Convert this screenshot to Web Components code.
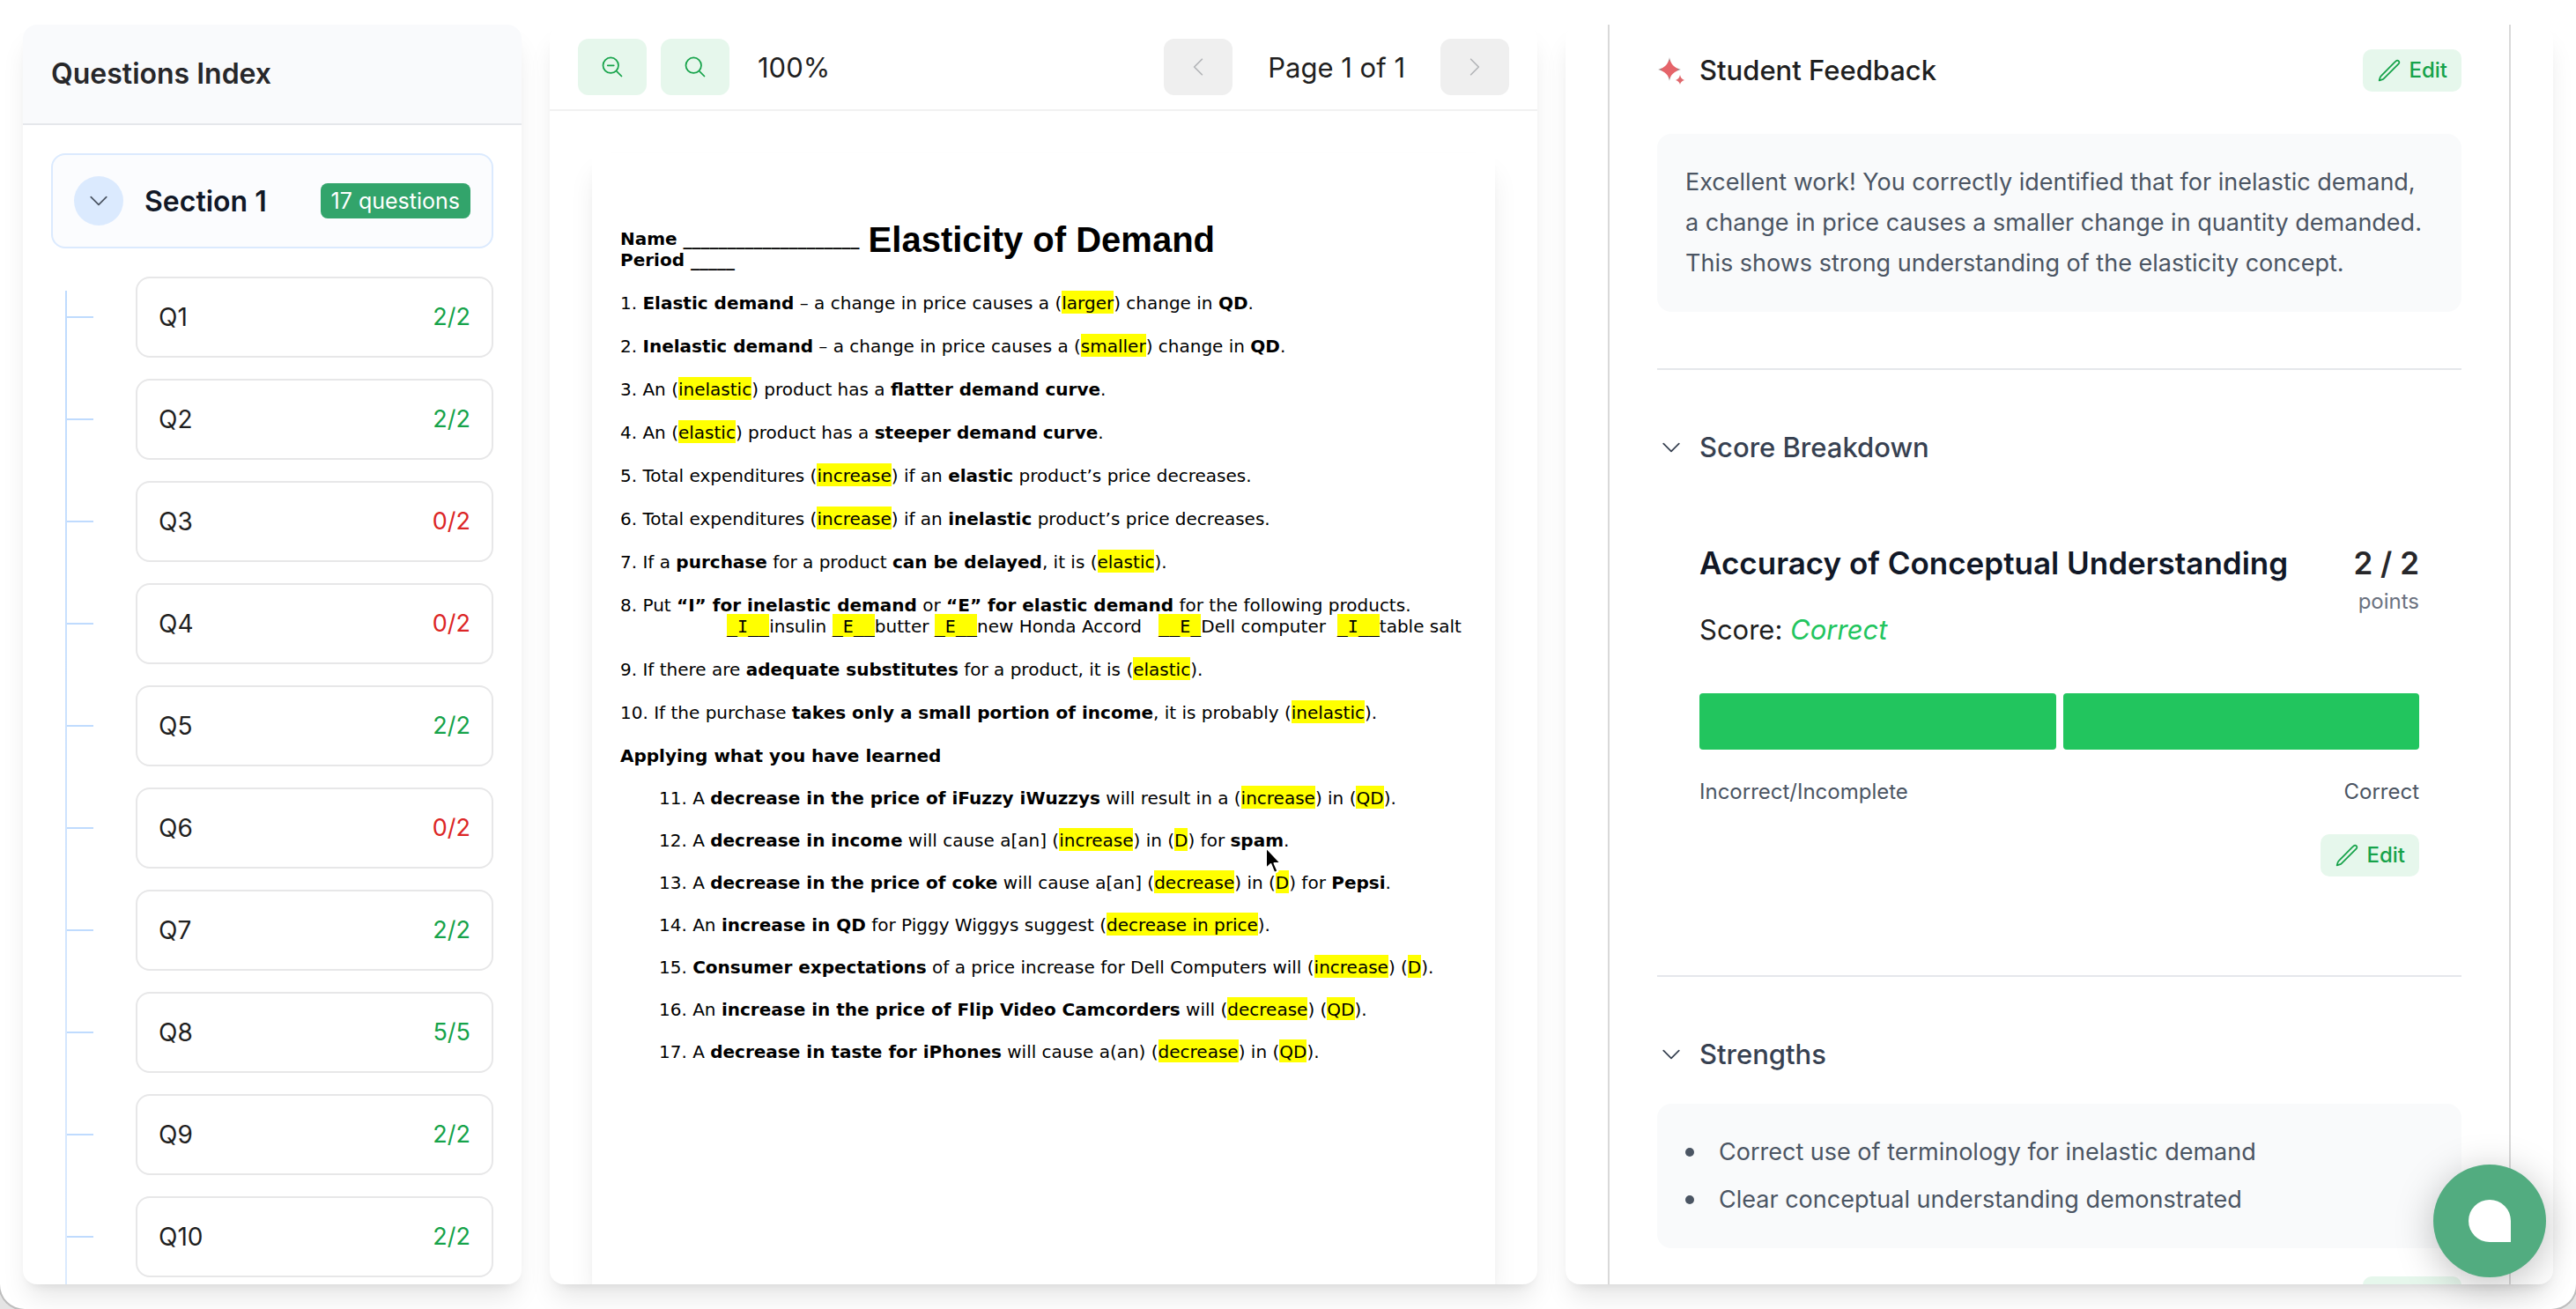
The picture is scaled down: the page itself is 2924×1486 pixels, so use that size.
<!DOCTYPE html>
<html lang="en">
<head>
<meta charset="utf-8">
<title>Grading</title>
<style>
  html {
    background: #e4e4e4;
  }

  body {
    margin: 0;
    font-family: Inter, "Liberation Sans", sans-serif;
    font-size: 28px;
    color: #1f1f1f;
  }
</style>
</head>
<body>
<grading-app>
  <questions-index slot="index" heading="Questions Index">
    <section-toggle slot="section" label="Section 1" count="17 questions"></section-toggle>
    <question-item label="Q1" score="2/2"></question-item>
    <question-item label="Q2" score="2/2"></question-item>
    <question-item label="Q3" score="0/2" wrong></question-item>
    <question-item label="Q4" score="0/2" wrong></question-item>
    <question-item label="Q5" score="2/2"></question-item>
    <question-item label="Q6" score="0/2" wrong></question-item>
    <question-item label="Q7" score="2/2"></question-item>
    <question-item label="Q8" score="5/5"></question-item>
    <question-item label="Q9" score="2/2"></question-item>
    <question-item label="Q10" score="2/2"></question-item>
  </questions-index>

  <document-viewer slot="document">
    <work-sheet></work-sheet>
  </document-viewer>

  <feedback-panel slot="feedback">
    <feedback-section heading="Student Feedback" icon="sparkle" editable>
      <note-box>Excellent work! You correctly identified that for inelastic demand, a change in price causes a smaller change in quantity demanded. This shows strong understanding of the elasticity concept.</note-box>
    </feedback-section>
    <feedback-section heading="Score Breakdown" icon="chevronDown" collapsible>
      <score-rubric heading="Accuracy of Conceptual Understanding" verdict="Correct" points="2 / 2" low="Incorrect/Incomplete" high="Correct" steps="2"></score-rubric>
    </feedback-section>
    <feedback-section heading="Strengths" icon="chevronDown" collapsible>
      <note-box>
        <note-point>Correct use of terminology for inelastic demand</note-point>
        <note-point>Clear conceptual understanding demonstrated</note-point>
      </note-box>
      <edit-button slot="footer"></edit-button>
    </feedback-section>
  </feedback-panel>

  <chat-launcher slot="chat"></chat-launcher>
</grading-app>

<script>
const icons = {
  chevronDown: 'm19.5 8.25-7.5 7.5-7.5-7.5',
  chevronLeft: 'M15.75 19.5 8.25 12l7.5-7.5',
  chevronRight: 'm8.25 4.5 7.5 7.5-7.5 7.5',
  search: 'm21 21-5.197-5.197m0 0A7.5 7.5 0 1 0 5.196 5.196a7.5 7.5 0 0 0 10.607 10.607Z',
  zoomOut: 'm21 21-5.197-5.197m0 0A7.5 7.5 0 1 0 5.196 5.196a7.5 7.5 0 0 0 10.607 10.607ZM13.5 10.5h-6',
  pencil: 'm16.862 4.487 1.687-1.688a1.875 1.875 0 1 1 2.652 2.652L6.832 19.82a4.5 4.5 0 0 1-1.897 1.13l-2.685.8.8-2.685a4.5 4.5 0 0 1 1.13-1.897L16.863 4.487Z'
}

const sparkle = `
<svg width="32" height="32" viewBox="0 0 32 32" aria-hidden="true">
  <defs>
    <radialGradient id="glow">
      <stop offset="0.6" stop-color="#e5646a"/>
      <stop offset="0.8" stop-color="#a07c7e"/>
      <stop offset="1" stop-color="#b9b9b9"/>
    </radialGradient>
  </defs>
  <path fill="url(#glow)" d="M14 1C15 8 19 13 27 15C19 17 15 21 14 28C13 21 9 17 1 15C9 13 13 8 14 1Z"/>
  <path fill="#e0696e" d="M26 21C26.600 24 28 26 31 27C28 28 26.600 29.500 26 32C25.400 29.500 24 28 21 27C24 26 25.400 24 26 21Z"/>
</svg>
`

function icon(name) {
  if (name === 'sparkle') return sparkle

  return `
    <svg width="28" height="28" viewBox="0 0 24 24" fill="none" stroke="currentColor"
      stroke-width="1.5" stroke-linecap="round" stroke-linejoin="round" aria-hidden="true">
      <path d="${icons[name]}"/>
    </svg>
  `
}

const base = `
  * { box-sizing: border-box; }
  h1, h2, h3, p { margin: 0; }
  svg { display: block; flex: none; }
  button { font: inherit; color: inherit; border: 0; background: none; padding: 0; margin: 0; cursor: pointer; }
`

class BaseElement extends HTMLElement {
  constructor() {
    super()
    this.attachShadow({mode: 'open'})
  }

  connectedCallback() {
    this.shadowRoot.innerHTML = `<style>${base}${this.styles()}</style>${this.markup()}`
  }

  attr(name) {
    return this.getAttribute(name) || ''
  }

  styles() { return '' }
  markup() { return '<slot></slot>' }
}

class GradingApp extends BaseElement {
  styles() {
    return `
      :host {
        --card-shadow: 0 20px 30px -6px rgba(0, 0, 0, .1), 0 8px 12px -8px rgba(0, 0, 0, .1);
        display: grid;
        grid-template-columns: 566px minmax(0, 1fr) minmax(0, 1fr);
        grid-template-rows: minmax(0, 1fr);
        gap: 32px;
        height: 100vh;
        box-sizing: border-box;
        padding: 28px 26px;
        overflow: hidden;
        background: #fff;
        border-radius: 0 0 28px 28px;
        box-shadow: 0 0 0 2px #bdbdbd;
      }
    `
  }

  markup() {
    return `
      <slot name="index"></slot>
      <slot name="document"></slot>
      <slot name="feedback"></slot>
      <slot name="chat"></slot>
    `
  }
}

const panel = `
  :host {
    display: flex;
    flex-direction: column;
    min-width: 0;
    overflow: hidden;
    background: #fff;
    border-radius: 16px;
    box-shadow: var(--card-shadow);
  }
`

class QuestionsIndex extends BaseElement {
  styles() {
    return `
      ${panel}
      header {
        padding: 32px;
        background: #f9fafc;
        border-bottom: 2px solid #e5e7eb;
      }
      h2 {
        font-size: 32px;
        line-height: 48px;
        font-weight: 600;
        color: #27272a;
      }
      .body {
        flex: 1;
        display: flex;
        flex-direction: column;
        gap: 32px;
        padding: 32px 32px 0;
      }
      nav {
        flex: 1;
        position: relative;
        display: flex;
        flex-direction: column;
        gap: 24px;
      }
      /* trunk of the tree that the ticks hang on */
      nav::before {
        content: "";
        position: absolute;
        left: 16px;
        top: 16px;
        bottom: 0;
        width: 2px;
        background: linear-gradient(#bfdbfe, #dbeafe);
      }
    `
  }

  markup() {
    return `
      <header><h2>${this.attr('heading')}</h2></header>
      <div class="body">
        <slot name="section"></slot>
        <nav><slot></slot></nav>
      </div>
    `
  }
}

class SectionToggle extends BaseElement {
  styles() {
    return `
      :host { display: block; }
      button {
        display: flex;
        align-items: center;
        gap: 24px;
        width: 100%;
        padding: 24px;
        border: 2px solid #dbeafe;
        border-radius: 16px;
        background: #fbfcfe;
      }
      .chevron {
        display: grid;
        place-items: center;
        width: 56px;
        height: 56px;
        border-radius: 50%;
        background: #dbeafe;
        color: #4b5563;
      }
      .label {
        flex: 1;
        text-align: left;
        font-size: 32px;
        font-weight: 600;
        color: #111827;
      }
      .count {
        padding: 0 12px;
        border-radius: 8px;
        background: #32a46b;
        color: #fff;
        font-size: 25px;
        line-height: 40px;
      }
    `
  }

  markup() {
    return `
      <button type="button" aria-expanded="true">
        <span class="chevron">${icon('chevronDown')}</span>
        <span class="label">${this.attr('label')}</span>
        <span class="count">${this.attr('count')}</span>
      </button>
    `
  }
}

class QuestionItem extends BaseElement {
  styles() {
    return `
      :host {
        --score-color: #16a34a;
        display: flex;
        align-items: center;
      }
      :host([wrong]) { --score-color: #dc2626; }
      .tick {
        width: 32px;
        height: 2px;
        margin: 0 48px 0 16px;
        background: #bfdbfe;
      }
      button {
        flex: 1;
        display: flex;
        justify-content: space-between;
        padding: 24px;
        border: 2px solid #e7e7e8;
        border-radius: 16px;
        background: #fff;
        font-size: 28px;
        line-height: 40px;
      }
      .score {
        font-size: 27px;
        color: var(--score-color);
      }
    `
  }

  markup() {
    return `
      <span class="tick"></span>
      <button type="button">
        <span>${this.attr('label')}</span>
        <span class="score">${this.attr('score')}</span>
      </button>
    `
  }
}

class IconButton extends BaseElement {
  styles() {
    return `
      :host { display: block; }
      button {
        display: grid;
        place-items: center;
        width: 78px;
        height: 64px;
        border-radius: 12px;
        background: #e6f7ec;
        color: #16a34a;
      }
      button:disabled {
        background: #efefef;
        color: #b4b6b9;
        cursor: default;
      }
    `
  }

  markup() {
    const disabled = this.hasAttribute('disabled') ? 'disabled' : ''

    return `<button type="button" aria-label="${this.attr('label')}" ${disabled}>${icon(this.attr('icon'))}</button>`
  }
}

class DocumentViewer extends BaseElement {
  styles() {
    return `
      ${panel}
      header, .zoom, .pager {
        display: flex;
        align-items: center;
      }
      header {
        justify-content: space-between;
        padding: 16px 32px;
        border-bottom: 2px solid #f1f1f1;
        font-size: 31px;
      }
      .zoom { gap: 16px; }
      .zoom output { margin-left: 16px; }
      .pager { gap: 40px; }
      .body {
        flex: 1;
        display: flex;
        padding: 48px 48px 0;
      }
    `
  }

  markup() {
    return `
      <header>
        <div class="zoom">
          <icon-button icon="zoomOut" label="Zoom out"></icon-button>
          <icon-button icon="search" label="Zoom in"></icon-button>
          <output>100%</output>
        </div>
        <div class="pager">
          <icon-button icon="chevronLeft" label="Previous page" disabled></icon-button>
          <span>Page 1 of 1</span>
          <icon-button icon="chevronRight" label="Next page" disabled></icon-button>
        </div>
      </header>
      <div class="body"><slot></slot></div>
    `
  }
}

class WorkSheet extends BaseElement {
  styles() {
    return `
      :host {
        flex: 1;
        position: relative;
        box-sizing: border-box;
        padding: 63px 32px 0;
        background: #fff;
        box-shadow: var(--card-shadow);
        color: #000;
        font-family: "DejaVu Sans", sans-serif;
        font-size: 20px;
        line-height: 24px;
        white-space: nowrap;
      }
      header {
        display: flex;
        align-items: flex-end;
        gap: 10px;
        margin-bottom: 25px;
        font-weight: 700;
      }
      h1 {
        font-family: "Liberation Sans", sans-serif;
        font-size: 40px;
        line-height: 70px;
      }
      .main, .applied {
        display: grid;
        gap: 25px;
      }
      .applied {
        gap: 24px;
        padding: 24px 0 0 44px;
      }
      .products {
        display: block;
        padding-left: 121px;
      }
      mark {
        padding-top: 2px;
        background: #ff0;
        color: inherit;
      }
      .blank { font-family: "DejaVu Sans Mono", monospace; }
      .cursor {
        position: absolute;
        left: 763px;
        top: 786px;
      }
    `
  }

  markup() {
    return `
      <header>
        <div>
          <p>Name ____________________</p>
          <p>Period _____</p>
        </div>
        <h1>Elasticity of Demand</h1>
      </header>
      <div class="main">
        <p>1. <b>Elastic demand</b> – a change in price causes a (<mark>larger</mark>) change in <b>QD</b>.</p>
        <p>2. <b>Inelastic demand</b> – a change in price causes a (<mark>smaller</mark>) change in <b>QD</b>.</p>
        <p>3. An (<mark>inelastic</mark>) product has a <b>flatter demand curve</b>.</p>
        <p>4. An (<mark>elastic</mark>) product has a <b>steeper demand curve</b>.</p>
        <p>5. Total expenditures (<mark>increase</mark>) if an <b>elastic</b> product’s price decreases.</p>
        <p>6. Total expenditures (<mark>increase</mark>) if an <b>inelastic</b> product’s price decreases.</p>
        <p>7. If a <b>purchase</b> for a product <b>can be delayed</b>, it is (<mark>elastic</mark>).</p>
        <p>8. Put <b>“I” for inelastic demand</b> or <b>“E” for elastic demand</b> for the following products.
          <span class="products"><mark class="blank">_I__</mark>insulin <mark class="blank">_E__</mark>butter <mark class="blank">_E__</mark>new Honda Accord &nbsp;&nbsp;<mark class="blank">__E_</mark>Dell computer &nbsp;<mark class="blank">_I__</mark>table salt</span></p>
        <p>9. If there are <b>adequate substitutes</b> for a product, it is (<mark>elastic</mark>).</p>
        <p>10. If the purchase <b>takes only a small portion of income</b>, it is probably (<mark>inelastic</mark>).</p>
        <p><b>Applying what you have learned</b></p>
      </div>
      <div class="applied">
        <p>11. A <b>decrease in the price of iFuzzy iWuzzys</b> will result in a (<mark>increase</mark>) in (<mark>QD</mark>).</p>
        <p>12. A <b>decrease in income</b> will cause a[an] (<mark>increase</mark>) in (<mark>D</mark>) for <b>spam</b>.</p>
        <p>13. A <b>decrease in the price of coke</b> will cause a[an] (<mark>decrease</mark>) in (<mark>D</mark>) for <b>Pepsi</b>.</p>
        <p>14. An <b>increase in QD</b> for Piggy Wiggys suggest (<mark>decrease in price</mark>).</p>
        <p>15. <b>Consumer expectations</b> of a price increase for Dell Computers will (<mark>increase</mark>) (<mark>D</mark>).</p>
        <p>16. An <b>increase in the price of Flip Video Camcorders</b> will (<mark>decrease</mark>) (<mark>QD</mark>).</p>
        <p>17. A <b>decrease in taste for iPhones</b> will cause a(an) (<mark>decrease</mark>) in (<mark>QD</mark>).</p>
      </div>
      <svg class="cursor" width="22" height="34" viewBox="0 0 22 34" aria-hidden="true">
        <path fill="#000" stroke="#fff" stroke-width="2" stroke-linejoin="round"
          d="M2 2V26L7.500 21L11.500 31L15.500 29L11.500 20H19Z"/>
      </svg>
    `
  }
}

class FeedbackPanel extends BaseElement {
  styles() {
    return `
      ${panel}
      .card {
        flex: 1 0 auto;
        margin: 0 48px;
        padding: 28px 54px;
        border: solid #d9d9d9;
        border-width: 0 2px;
      }
    `
  }

  markup() {
    return '<div class="card"><slot></slot></div>'
  }
}

class FeedbackSection extends BaseElement {
  styles() {
    return `
      :host {
        display: block;
        padding-bottom: 64px;
      }
      :host(:not(:first-child)) {
        border-top: 2px solid #e5e7eb;
        padding-top: 64px;
      }
      header {
        display: flex;
        align-items: center;
        justify-content: space-between;
        margin-bottom: 32px;
      }
      :host([editable]) header { margin-bottom: 48px; }
      h3, button {
        display: flex;
        align-items: center;
        gap: 16px;
        font-size: 31px;
        line-height: 48px;
        font-weight: 500;
      }
      :host([collapsible]) h3 { color: #374151; }
      .icon {
        display: grid;
        place-items: center;
        width: 32px;
      }
      ::slotted([slot="footer"]) {
        margin: 32px 0 0 auto;
      }
    `
  }

  markup() {
    const label = `<span class="icon">${icon(this.attr('icon'))}</span>${this.attr('heading')}`
    const title = this.hasAttribute('collapsible')
      ? `<button type="button" aria-expanded="true">${label}</button>`
      : label

    return `
      <header>
        <h3>${title}</h3>
        ${this.hasAttribute('editable') ? '<edit-button></edit-button>' : ''}
      </header>
      <slot></slot>
      <slot name="footer"></slot>
    `
  }
}

class NoteBox extends BaseElement {
  styles() {
    return `
      :host {
        display: flex;
        flex-direction: column;
        gap: 8px;
        padding: 32px;
        border-radius: 16px;
        background: #f9fafb;
        color: #4b5563;
        font-size: 27px;
        line-height: 46px;
      }
    `
  }
}

class NotePoint extends BaseElement {
  styles() {
    return `
      :host {
        display: flex;
        align-items: center;
        gap: 28px;
      }
      .dot {
        width: 10px;
        height: 10px;
        border-radius: 50%;
        background: currentColor;
      }
    `
  }

  markup() {
    return '<span class="dot"></span><span><slot></slot></span>'
  }
}

class EditButton extends BaseElement {
  styles() {
    return `
      :host {
        display: block;
        width: fit-content;
      }
      button {
        display: flex;
        align-items: center;
        gap: 8px;
        height: 48px;
        padding: 0 16px;
        border-radius: 10px;
        background: #e6f7ec;
        color: #16a34a;
        font-size: 24px;
        line-height: 32px;
        font-weight: 500;
      }
    `
  }

  markup() {
    return `<button type="button">${icon('pencil')}Edit</button>`
  }
}

class ScoreRubric extends BaseElement {
  styles() {
    return `
      :host {
        display: block;
        padding: 47px 48px 48px;
      }
      .top, .scale, .ends {
        display: flex;
        justify-content: space-between;
      }
      .title {
        display: grid;
        gap: 24px;
      }
      .heading, .points {
        font-size: 35px;
        line-height: 56px;
        font-weight: 600;
      }
      .heading { color: #111827; }
      .points { color: #27272a; }
      .verdict {
        font-size: 31px;
        line-height: 48px;
      }
      em { color: #22c55e; }
      .total {
        text-align: right;
        font-size: 24px;
        line-height: 32px;
        color: #6b7280;
      }
      .scale {
        gap: 8px;
        margin: 48px 0 32px;
      }
      .scale span {
        flex: 1;
        height: 64px;
        border-radius: 4px;
        background: #22c55e;
      }
      .ends {
        font-size: 24px;
        line-height: 32px;
        color: #4b5563;
      }
      edit-button { margin: 32px 0 0 auto; }
    `
  }

  markup() {
    return `
      <div class="top">
        <div class="title">
          <div class="heading">${this.attr('heading')}</div>
          <div class="verdict">Score: <em>${this.attr('verdict')}</em></div>
        </div>
        <div class="total">
          <div class="points">${this.attr('points')}</div>
          points
        </div>
      </div>
      <div class="scale">${'<span></span>'.repeat(Number(this.attr('steps')))}</div>
      <div class="ends"><span>${this.attr('low')}</span><span>${this.attr('high')}</span></div>
      <edit-button></edit-button>
    `
  }
}

class ChatLauncher extends BaseElement {
  styles() {
    return `
      :host {
        position: fixed;
        right: 34px;
        bottom: 36px;
      }
      button {
        display: grid;
        place-items: center;
        width: 128px;
        height: 128px;
        border-radius: 50%;
        background: #52ac80;
        box-shadow: 0 8px 44px rgba(0, 0, 0, .25);
      }
      .bubble {
        width: 48px;
        height: 48px;
        border-radius: 50% 50% 0 50%;
        background: #fff;
      }
    `
  }

  markup() {
    return '<button type="button" aria-label="Open chat"><span class="bubble"></span></button>'
  }
}

customElements.define('grading-app', GradingApp)
customElements.define('questions-index', QuestionsIndex)
customElements.define('section-toggle', SectionToggle)
customElements.define('question-item', QuestionItem)
customElements.define('icon-button', IconButton)
customElements.define('document-viewer', DocumentViewer)
customElements.define('work-sheet', WorkSheet)
customElements.define('feedback-panel', FeedbackPanel)
customElements.define('feedback-section', FeedbackSection)
customElements.define('note-box', NoteBox)
customElements.define('note-point', NotePoint)
customElements.define('edit-button', EditButton)
customElements.define('score-rubric', ScoreRubric)
customElements.define('chat-launcher', ChatLauncher)
</script>
</body>
</html>
